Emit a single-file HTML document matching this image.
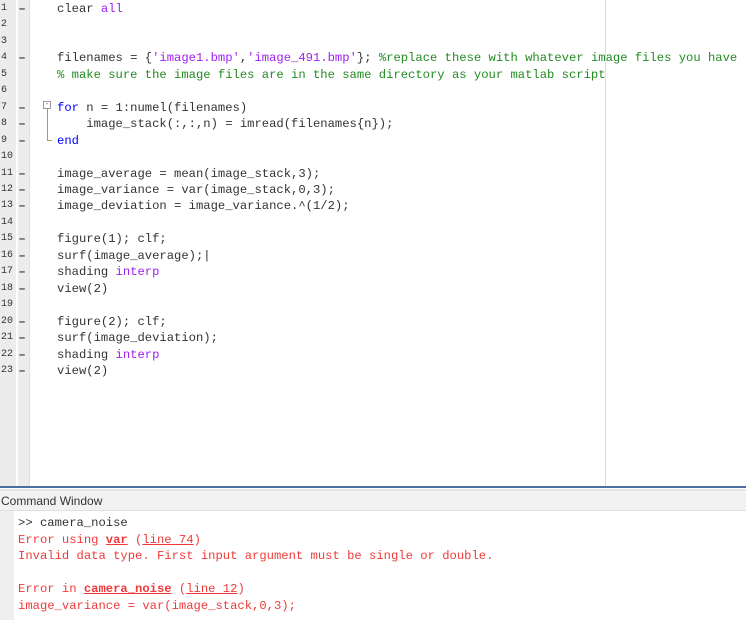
<!DOCTYPE html>
<html><head><style>
body{margin:0;width:746px;height:620px;overflow:hidden;background:#fff;position:relative;font-family:"Liberation Mono",monospace;}
.g1{position:absolute;left:0;top:0;width:16px;height:486px;background:#ececec}
.g2{position:absolute;left:18px;top:0;width:11px;height:486px;background:#ececec;border-right:1px solid #e0e0e0}
.margin{position:absolute;left:605px;top:0;width:1px;height:486px;background:#dcdcdc}
.ln{position:absolute;left:1px;top:1px;font-family:"Liberation Mono",monospace;font-size:10px;color:#333;line-height:16.45px}
.dash{position:absolute;left:19px;top:1px;font-family:"Liberation Sans",sans-serif;font-size:11px;color:#333;line-height:16.45px;font-weight:bold}
.code{position:absolute;left:57px;top:1px;font-size:12.2px;line-height:16.45px;color:#333;white-space:pre}
.s{color:#a020f0}.c{color:#228b22}.k{color:#0000ff}
.blue{position:absolute;left:0;top:486px;width:746px;height:2px;background:#4a6fa0}
.hdr{position:absolute;left:0;top:489px;width:746px;height:22px;background:#f2f2f2;border-top:2px solid #e4e4e4;border-bottom:1px solid #e0e0e0;box-sizing:border-box;font-family:"Liberation Sans",sans-serif;font-size:12px;color:#333;line-height:20px;padding-left:1px}
.cg{position:absolute;left:0;top:511px;width:14px;height:109px;background:#efefef}
.cmd{position:absolute;left:18px;font-size:12.2px;white-space:pre;color:#f03a3a}
u{text-decoration-thickness:1px}
</style></head><body>
<div class="g1"></div><div class="g2"></div><div class="margin"></div>
<div class="ln">1<br>2<br>3<br>4<br>5<br>6<br>7<br>8<br>9<br>10<br>11<br>12<br>13<br>14<br>15<br>16<br>17<br>18<br>19<br>20<br>21<br>22<br>23</div>
<div class="dash">–<br><br><br>–<br><br><br>–<br>–<br>–<br><br>–<br>–<br>–<br><br>–<br>–<br>–<br>–<br><br>–<br>–<br>–<br>–</div>
<div style="position:absolute;left:43px;top:101px;width:8px;height:8px;border:1px solid #999;box-sizing:border-box;font-size:8px;line-height:6px;text-align:center;color:#666">-</div>
<div style="position:absolute;left:47px;top:109px;width:4px;height:31px;border-left:1px solid #999;border-bottom:1px solid #999"></div>
<div class="code">clear <span class="s">all</span>


filenames = {<span class="s">'image1.bmp'</span>,<span class="s">'image_491.bmp'</span>}; <span class="c">%replace these with whatever image files you have</span>
<span class="c">% make sure the image files are in the same directory as your matlab script</span>

<span class="k">for</span> n = 1:numel(filenames)
    image_stack(:,:,n) = imread(filenames{n});
<span class="k">end</span>

image_average = mean(image_stack,3);
image_variance = var(image_stack,0,3);
image_deviation = image_variance.^(1/2);

figure(1); clf;
surf(image_average);|
shading <span class="s">interp</span>
view(2)

figure(2); clf;
surf(image_deviation);
shading <span class="s">interp</span>
view(2)</div>
<div class="blue"></div>
<div class="hdr">Command Window</div>
<div class="cg"></div>
<div class="cmd" style="top:516px;color:#333">&gt;&gt; camera_noise</div>
<div class="cmd" style="top:533px">Error using <u><b>var</b></u> (<u>line 74</u>)</div>
<div class="cmd" style="top:549px">Invalid data type. First input argument must be single or double.</div>
<div class="cmd" style="top:582px">Error in <u><b>camera_noise</b></u> (<u>line 12</u>)</div>
<div class="cmd" style="top:599px">image_variance = var(image_stack,0,3);</div>
</body></html>
